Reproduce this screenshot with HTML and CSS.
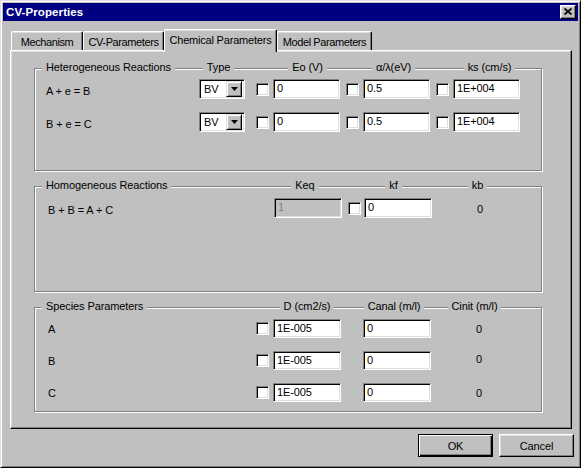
FILE: index.html
```html
<!DOCTYPE html>
<html>
<head>
<meta charset="utf-8">
<title>CV-Properties</title>
<link rel="stylesheet" href="styles.css">
</head>
<body>
<div class="window">
  <div class="titlebar">
    <span class="title">CV-Properties</span>
    <div class="close"><svg width="8" height="7" viewBox="0 0 8 7"><path d="M0.5 0.5 L7.5 6.5 M7.5 0.5 L0.5 6.5" stroke="#000" stroke-width="1.7" fill="none"/></svg></div>
  </div>

  <div class="tabs">
    <div class="tab t-mech">Mechanism</div>
    <div class="tab t-cv">CV-Parameters</div>
    <div class="tab selected t-chem">Chemical Parameters</div>
    <div class="tab t-model">Model Parameters</div>
  </div>

  <div class="panel">
    <!-- Heterogeneous -->
    <div class="group g1">
      <div class="ghead">
        <div class="hc h1-title"><span>Heterogeneous Reactions</span></div>
        <div class="hc h1-type"><span>Type</span></div>
        <div class="hc h1-eo"><span>Eo (V)</span></div>
        <div class="hc h1-al"><span>α/λ(eV)</span></div>
        <div class="hc h1-ks"><span>ks (cm/s)</span></div>
      </div>
      <div class="row r1">
        <div class="lbl l1">A + e = B</div>
        <div class="select"><span>BV</span><div class="arrow"><svg width="7" height="4" viewBox="0 0 7 4"><polygon points="0,0 7,0 3.5,4" fill="#000"/></svg></div></div>
        <div class="check c-type"></div>
        <div class="field">0</div>
        <div class="check c-gap"></div>
        <div class="field">0.5</div>
        <div class="check c-gap"></div>
        <div class="field">1E+004</div>
      </div>
      <div class="row r1 r1b">
        <div class="lbl l1">B + e = C</div>
        <div class="select"><span>BV</span><div class="arrow"><svg width="7" height="4" viewBox="0 0 7 4"><polygon points="0,0 7,0 3.5,4" fill="#000"/></svg></div></div>
        <div class="check c-type"></div>
        <div class="field">0</div>
        <div class="check c-gap"></div>
        <div class="field">0.5</div>
        <div class="check c-gap"></div>
        <div class="field">1E+004</div>
      </div>
    </div>

    <!-- Homogeneous -->
    <div class="group g2">
      <div class="ghead">
        <div class="hc h2-title"><span>Homogeneous Reactions</span></div>
        <div class="hc h2-keq"><span>Keq</span></div>
        <div class="hc h2-kf"><span>kf</span></div>
        <div class="hc h2-kb"><span>kb</span></div>
      </div>
      <div class="row r2">
        <div class="lbl l2">B + B = A + C</div>
        <div class="field wide disabled">1</div>
        <div class="check c-keq"></div>
        <div class="field wide f-kf">0</div>
        <div class="val v-kb">0</div>
      </div>
    </div>

    <!-- Species -->
    <div class="group g3">
      <div class="ghead">
        <div class="hc h3-title"><span>Species Parameters</span></div>
        <div class="hc h3-d"><span>D (cm2/s)</span></div>
        <div class="hc h3-canal"><span>Canal (m/l)</span></div>
        <div class="hc h3-cinit"><span>Cinit (m/l)</span></div>
      </div>
      <div class="row r3">
        <div class="lbl l3">A</div>
        <div class="check"></div>
        <div class="field wide short f-d">1E-005</div>
        <div class="field wide short f-canal">0</div>
        <div class="val v-cinit">0</div>
      </div>
      <div class="row r3">
        <div class="lbl l3">B</div>
        <div class="check"></div>
        <div class="field wide short f-d">1E-005</div>
        <div class="field wide short f-canal">0</div>
        <div class="val v-cinit v-up">0</div>
      </div>
      <div class="row r3">
        <div class="lbl l3">C</div>
        <div class="check"></div>
        <div class="field wide short f-d">1E-005</div>
        <div class="field wide short f-canal">0</div>
        <div class="val v-cinit">0</div>
      </div>
    </div>
  </div>

  <div class="buttons">
    <div class="btn default">OK</div>
    <div class="btn">Cancel</div>
  </div>
</div>
</body>
</html>
```

FILE: styles.css
```css
* { box-sizing: border-box; }

html, body {
  margin: 0;
  padding: 0;
  background: #c0c0c0;
}

body {
  font-family: "Liberation Sans", Arial, sans-serif;
  font-size: 11px;
  letter-spacing: -0.1px;
  color: #000;
}

.window {
  width: 581px;
  height: 468px;
  background: #c0c0c0;
  border: 1px solid;
  border-color: #dfdfdf #000 #000 #dfdfdf;
  box-shadow: inset 1px 1px 0 #fff, inset -1px -1px 0 #808080;
  padding: 2px;
}

/* Title bar */
.titlebar {
  height: 18px;
  background: #000080;
  display: flex;
  align-items: center;
  justify-content: space-between;
  padding: 0 2px 0 3px;
}

.title {
  color: #fff;
  font-weight: bold;
  font-size: 11.5px;
  letter-spacing: 0.1px;
}

.close {
  width: 16px;
  height: 14px;
  background: #c0c0c0;
  border: 1px solid;
  border-color: #fff #000 #000 #fff;
  box-shadow: inset -1px -1px 0 #808080, inset 1px 1px 0 #dfdfdf;
  display: flex;
  align-items: center;
  justify-content: center;
  padding-bottom: 1px;
}

/* Tabs */
.tabs {
  display: flex;
  align-items: flex-end;
  height: 21px;
  margin-top: 8px;
  padding-left: 8px;
}

.tab {
  height: 19px;
  display: flex;
  align-items: center;
  justify-content: center;
  border-top: 1px solid #fff;
  border-left: 1px solid #fff;
  border-right: 1px solid #000;
  border-radius: 2px 2px 0 0;
  box-shadow: inset -1px 0 0 #808080, inset 0 1px 0 #dfdfdf;
  background: #c0c0c0;
  padding-top: 1px;
  letter-spacing: -0.4px;
  white-space: nowrap;
}

.tab.selected {
  height: 23px;
  margin-bottom: -2px;
  position: relative;
  z-index: 1;
  padding-bottom: 4px;
  letter-spacing: -0.2px;
}

.t-mech { width: 72px; }
.t-cv { width: 81px; }
.t-chem { width: 113px; }
.t-model { width: 95px; }

/* Panel */
.panel {
  margin-left: 7px;
  width: 562px;
  height: 379px;
  border: 1px solid;
  border-color: #fff #000 #000 #fff;
  box-shadow: inset -1px -1px 0 #808080, inset 1px 1px 0 #dfdfdf;
  padding: 17px 0 0 23px;
}

/* Group boxes */
.group {
  width: 508px;
  border: 1px solid #808080;
  box-shadow: inset 1px 1px 0 #fff, 1px 1px 0 #fff;
}

.g1 { height: 103px; }
.g2 { height: 106px; margin-top: 15px; }
.g3 { height: 105px; margin-top: 15px; }

.ghead {
  display: flex;
  height: 13px;
  line-height: 13px;
  margin-top: -8px;
  padding-left: 7px;
}

.hc { text-align: center; white-space: nowrap; }
.hc span { background: #c0c0c0; padding: 0 4px; }
.hc:first-child { text-align: left; }

.h1-title { width: 148px; }
.h1-type { width: 57px; }
.h1-eo { width: 69px; margin-left: 26px; }
.h1-al { width: 67px; margin-left: 18px; }
.h1-ks { width: 69px; margin-left: 28px; }

.h2-title { width: 232px; }
.h2-keq { width: 62px; }
.h2-kf { width: 61px; margin-left: 27px; }
.h2-kb { width: 61px; margin-left: 23px; }

.h3-title { width: 231px; }
.h3-d { width: 68px; }
.h3-canal { width: 68px; margin-left: 19px; }
.h3-cinit { width: 67px; margin-left: 13px; }

/* Rows */
.row {
  display: flex;
  align-items: center;
}

.r1 { margin-top: 5px; padding-left: 11px; height: 20px; }
.r1b { margin-top: 13px; }
.r2 { margin-top: 6px; padding-left: 13px; height: 20px; }
.r3 { margin-top: 6px; padding-left: 13px; height: 19px; }
.r3 + .r3 { margin-top: 13px; }

.lbl { padding-top: 3px; white-space: nowrap; }
.l1 { width: 153px; }
.l2 { width: 226px; }
.l3 { width: 208px; padding-top: 1px; }

/* Controls */
.select, .field, .check {
  background: #fff;
  border: 1px solid;
  border-color: #808080 #fff #fff #808080;
  box-shadow: inset 1px 1px 0 #000, inset -1px -1px 0 #dfdfdf;
}

.select {
  width: 46px;
  height: 20px;
  display: flex;
  align-items: center;
  justify-content: space-between;
  padding: 2px;
}

.select span { padding-left: 2px; }

.arrow {
  width: 16px;
  height: 16px;
  background: #c0c0c0;
  border: 1px solid;
  border-color: #dfdfdf #000 #000 #dfdfdf;
  box-shadow: inset 1px 1px 0 #fff, inset -1px -1px 0 #808080;
  display: flex;
  align-items: center;
  justify-content: center;
}

.check {
  width: 13px;
  height: 13px;
  flex: none;
}

.c-type { margin-left: 11px; margin-right: 4px; }
.c-gap { margin-left: 6px; margin-right: 4px; }
.c-keq { margin-left: 6px; margin-right: 3px; }

.field {
  width: 67px;
  height: 20px;
  padding-left: 3px;
  line-height: 17px;
  white-space: nowrap;
  flex: none;
}

.field.wide { width: 68px; }
.field.short { height: 19px; line-height: 16px; }

.field.disabled {
  background: #c0c0c0;
  color: #808080;
}

.f-d { margin-left: 4px; }
.f-canal { margin-left: 22px; }

.val { padding-top: 1px; }
.v-kb { margin-left: 45px; }
.v-cinit { margin-left: 45px; }
.v-up { margin-top: -5px; }

/* Buttons */
.buttons {
  display: flex;
  justify-content: flex-end;
  gap: 6px;
  margin-top: 5px;
  padding-right: 4px;
}

.btn {
  width: 75px;
  height: 23px;
  display: flex;
  align-items: center;
  justify-content: center;
  border: 1px solid;
  border-color: #fff #000 #000 #fff;
  box-shadow: inset -1px -1px 0 #808080, inset 1px 1px 0 #dfdfdf;
  background: #c0c0c0;
}

.btn.default {
  border-color: #000;
  box-shadow: inset 1px 1px 0 #fff, inset -1px -1px 0 #000, inset -2px -2px 0 #808080;
}
```
